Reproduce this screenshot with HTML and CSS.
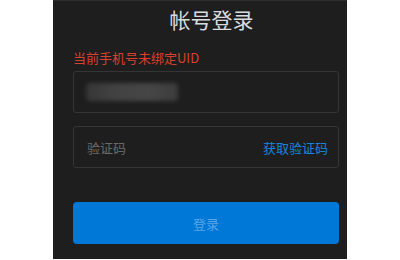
FILE: index.html
```html
<!DOCTYPE html>
<html lang="zh-CN">
<head>
<meta charset="utf-8">
<title>帐号登录</title>
<link rel="stylesheet" href="styles.css">
</head>
<body>
<div class="panel">
  <h1 class="title">帐号登录</h1>
  <div class="error">当前手机号未绑定UID</div>
  <div class="field">
    <div class="blur-value"></div>
  </div>
  <div class="field field-code">
    <input class="code-input" type="text" placeholder="验证码">
    <a class="get-code" href="#">获取验证码</a>
  </div>
  <button class="submit" type="button">登录</button>
</div>
</body>
</html>
```

FILE: styles.css
```css
html, body {
  margin: 0;
  padding: 0;
  background: #ffffff;
}

body {
  font-family: "Noto Sans CJK SC", "Noto Sans", sans-serif;
}

.panel {
  box-sizing: border-box;
  width: 294px;
  height: 259px;
  margin-left: 53px;
  background: #1e1e1e;
  border-top: 1px solid #2e2e2e;
  padding: 0 8px 0 20px;
  display: flex;
  flex-direction: column;
}

.title {
  margin: 0;
  padding: 7px 0 0 11px;
  font-size: 21px;
  line-height: 22px;
  font-weight: normal;
  color: #d9dde0;
  text-align: center;
}

.error {
  margin-top: 21px;
  font-size: 13px;
  line-height: 14px;
  color: #d8412f;
}

.field {
  box-sizing: border-box;
  width: 266px;
  height: 42px;
  border: 1px solid #353535;
  border-radius: 3px;
  display: flex;
  align-items: center;
  padding: 0 10px 0 12px;
}

.error + .field {
  margin-top: 6px;
}

.field-code {
  margin-top: 13px;
  justify-content: space-between;
}

.blur-value {
  width: 92px;
  height: 18px;
  background: linear-gradient(90deg, #363636 0%, #424242 30%, #464646 70%, #3c3c3c 100%);
  border-radius: 4px;
  filter: blur(2px);
  margin-top: 0;
}

.code-input {
  flex: 1;
  min-width: 0;
  border: 0;
  outline: 0;
  background: transparent;
  padding: 0 0 0 1px;
  font-family: inherit;
  font-size: 13px;
  color: #cccccc;
}

.code-input::placeholder {
  color: #6a6a6a;
}

.get-code {
  font-size: 13px;
  color: #1a84dd;
  text-decoration: none;
}

.submit {
  box-sizing: border-box;
  width: 266px;
  height: 42px;
  margin-top: 34px;
  border: 0;
  border-radius: 4px;
  background: #0078d7;
  color: #5ba6e8;
  font-family: inherit;
  font-size: 13px;
  padding: 0;
}
```
